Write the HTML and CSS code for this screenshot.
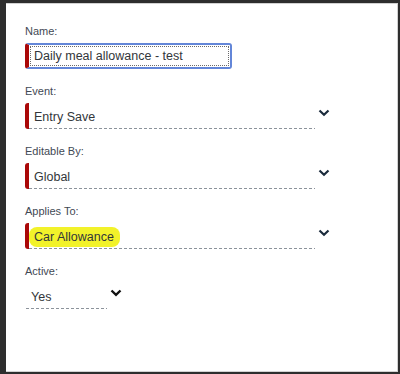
FILE: index.html
```html
<!DOCTYPE html>
<html lang="en">

<head>
    <meta charset="UTF-8">
    <meta name="viewport" content="width=device-width, initial-scale=1.0">
    <title>Rule Details</title>
    <link rel="stylesheet" href="styles.css">
</head>

<body>
    <div class="window">
        <form class="form">
            <div class="group">
                <label class="label">Name:</label>
                <div class="input required">
                    <span class="focus">Daily meal allowance - test</span>
                </div>
            </div>

            <div class="group">
                <label class="label">Event:</label>
                <div class="row">
                    <div class="select required">Entry Save</div>
                    <svg class="chevron" width="12" height="8" viewBox="0 0 12 8">
                        <polyline points="1.5,1.5 6,5.8 10.5,1.5" />
                    </svg>
                </div>
            </div>

            <div class="group">
                <label class="label">Editable By:</label>
                <div class="row">
                    <div class="select required">Global</div>
                    <svg class="chevron" width="12" height="8" viewBox="0 0 12 8">
                        <polyline points="1.5,1.5 6,5.8 10.5,1.5" />
                    </svg>
                </div>
            </div>

            <div class="group">
                <label class="label">Applies To:</label>
                <div class="row">
                    <div class="select required"><span class="marker">Car Allowance</span></div>
                    <svg class="chevron" width="12" height="8" viewBox="0 0 12 8">
                        <polyline points="1.5,1.5 6,5.8 10.5,1.5" />
                    </svg>
                </div>
            </div>

            <div class="group">
                <label class="label">Active:</label>
                <div class="row">
                    <div class="select short">Yes</div>
                    <svg class="chevron dark" width="12" height="8" viewBox="0 0 12 8">
                        <polyline points="1.5,1.5 6,5.8 10.5,1.5" />
                    </svg>
                </div>
            </div>
        </form>
    </div>
</body>

</html>
```

FILE: styles.css
```css
body {
    font-family: "Liberation Sans", Arial, sans-serif;
    margin: 0;
    padding: 0;
    height: 374px;
    overflow: hidden;
    background-color: #2e2e2e;
}

.window {
    box-sizing: border-box;
    height: 369px;
    margin: 3px 2px 0 6px;
    background-color: #fff;
    border: 1px solid #d2d2d2;
    border-left: none;
}

.form {
    padding: 20px 0 0 19px;
}

.group {
    height: 60px;
}

.label {
    display: block;
    font-size: 11px;
    line-height: 14px;
    color: #3f4954;
    margin-bottom: 5px;
}

/* text field with focus ring */
.input {
    box-sizing: border-box;
    width: 207px;
    height: 26px;
    border: 2px solid #6386d8;
    border-radius: 3px;
    padding: 1px;
}

.input .focus {
    display: flex;
    align-items: center;
    box-sizing: border-box;
    height: 100%;
    padding-left: 3px;
    border: 1px dotted #6b6b6b;
    font-size: 12.5px;
    color: #32363a;
}

.required {
    border-left: 4px solid #aa0808;
    border-radius: 3px 0 0 3px;
}

.input.required {
    border-radius: 3px;
}

.row {
    display: flex;
    align-items: flex-start;
}

.select {
    box-sizing: border-box;
    width: 290px;
    height: 26px;
    display: flex;
    align-items: center;
    padding: 1px 0 0 5px;
    font-size: 12.5px;
    color: #32363a;
    background: repeating-linear-gradient(to right, #8c939b 0 3px, transparent 3px 5px) left bottom / 100% 1px no-repeat;
}

.select.short {
    width: 81px;
    padding-left: 5px;
    margin-left: 1px;
}

.marker {
    background-color: #f2f22a;
    border-radius: 8px;
    padding: 3px 6px 3px 5px;
    margin-left: -5px;
}

.chevron {
    margin: 6px 0 0 3px;
    fill: none;
    stroke: #1b2b3c;
    stroke-width: 2.2;
}

.chevron.dark {
    stroke: #111;
    stroke-width: 2.4;
}
```
